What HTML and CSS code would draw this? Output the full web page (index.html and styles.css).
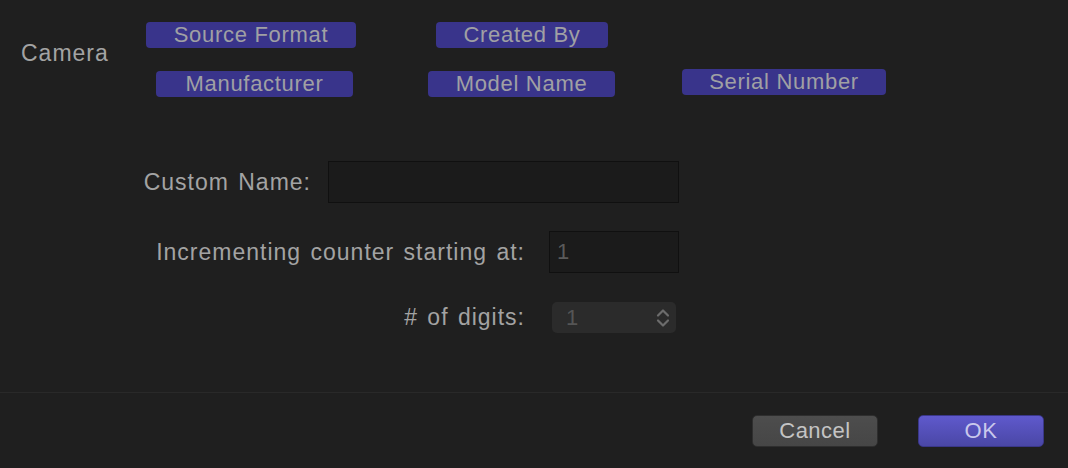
FILE: index.html
```html
<!DOCTYPE html>
<html lang="en">
<head>
    <meta charset="UTF-8">
    <title>Naming Preset</title>
    <link rel="stylesheet" href="styles.css">
</head>
<body>
    <div id="dialog">
        <div id="dialog-body">
            <div class="token-group">
                <div class="group-name">Camera</div>
                <div class="token-rows">
                    <div class="token-row first">
                        <span class="token source">Source Format</span>
                        <span class="token created">Created By</span>
                    </div>
                    <div class="token-row second">
                        <span class="token maker">Manufacturer</span>
                        <span class="token model">Model Name</span>
                        <span class="token serial">Serial Number</span>
                    </div>
                </div>
            </div>

            <div class="fields">
                <div class="field-row name-row">
                    <label>Custom Name:</label>
                    <input type="text" class="text-field wide">
                </div>
                <div class="field-row counter-row">
                    <label>Incrementing counter starting at:</label>
                    <input type="text" class="text-field narrow" value="1">
                </div>
                <div class="field-row digits-row">
                    <label># of digits:</label>
                    <div class="popup">
                        <span>1</span>
                        <svg width="14" height="22" viewBox="0 0 14 22">
                            <path d="M2 8.5 L7 3.5 L12 8.5 M2 13.5 L7 18.5 L12 13.5" fill="none" stroke="#6c6c6c" stroke-width="2.2" stroke-linecap="round" stroke-linejoin="round"/>
                        </svg>
                    </div>
                </div>
            </div>
        </div>

        <div id="dialog-footer">
            <button class="btn cancel">Cancel</button>
            <button class="btn ok">OK</button>
        </div>
    </div>
</body>
</html>
```

FILE: styles.css
```css
body {
    font-family: 'Liberation Sans', Arial, sans-serif;
    margin: 0;
    padding: 0;
    background-color: #1f1f1f;
    color: #a3a3a3;
    width: 1068px;
    height: 468px;
    overflow: hidden;
}

#dialog {
    display: flex;
    flex-direction: column;
    height: 468px;
}

#dialog-body {
    height: 392px;
    border-bottom: 1px solid #292929;
}

.token-group {
    display: flex;
    padding-top: 22px;
}

.group-name {
    width: 125px;
    padding-left: 21px;
    padding-top: 18px;
    font-size: 23px;
    letter-spacing: 1px;
}

.token-row {
    display: flex;
    align-items: flex-start;
}

.token-row.second {
    margin-top: 23px;
}

.token {
    display: flex;
    justify-content: center;
    align-items: center;
    height: 26px;
    background-color: #39348b;
    border-radius: 4px;
    font-size: 22px;
    letter-spacing: 0.7px;
    color: #a0a0a4;
}

.token.source {
    width: 210px;
}

.token.created {
    width: 172px;
    margin-left: 80px;
}

.token.maker {
    width: 197px;
    margin-left: 10px;
}

.token.model {
    width: 187px;
    margin-left: 75px;
}

.token.serial {
    width: 204px;
    margin-left: 67px;
    margin-top: -2px;
}

.fields {
    width: 679px;
    padding-top: 64px;
}

.field-row {
    display: flex;
    justify-content: flex-end;
    align-items: center;
}

.field-row label {
    font-size: 23px;
    letter-spacing: 1px;
    word-spacing: 2px;
}

.text-field {
    box-sizing: border-box;
    height: 42px;
    background-color: #1b1b1b;
    border: 1px solid #101010;
    color: #5a5a5a;
    font-family: inherit;
    font-size: 22px;
    padding: 0 7px;
    outline: none;
}

.text-field.wide {
    width: 351px;
    margin-left: 17px;
}

.text-field.narrow {
    width: 130px;
    margin-left: 24px;
}

.counter-row {
    margin-top: 28px;
}

.digits-row {
    margin-top: 29px;
}

.popup {
    box-sizing: border-box;
    display: flex;
    justify-content: space-between;
    align-items: center;
    width: 124px;
    height: 31px;
    margin-left: 27px;
    margin-right: 3px;
    padding: 0 6px 0 14px;
    background-color: #2b2b2b;
    border-radius: 5px;
    color: #555555;
    font-size: 22px;
}

#dialog-footer {
    display: flex;
    justify-content: flex-end;
    gap: 40px;
    padding: 22px 24px 0 0;
}

.btn {
    width: 126px;
    height: 32px;
    border-radius: 5px;
    font-family: inherit;
    font-size: 22px;
    letter-spacing: 0.5px;
    cursor: pointer;
}

.btn.cancel {
    background: linear-gradient(#4d4d4d, #464646);
    border: 1px solid #2e2e2e;
    color: #c4c4c4;
}

.btn.ok {
    background: linear-gradient(#5f59cc, #4a47a6);
    border: 1px solid #3a3789;
    color: #c9c8ec;
}
```
